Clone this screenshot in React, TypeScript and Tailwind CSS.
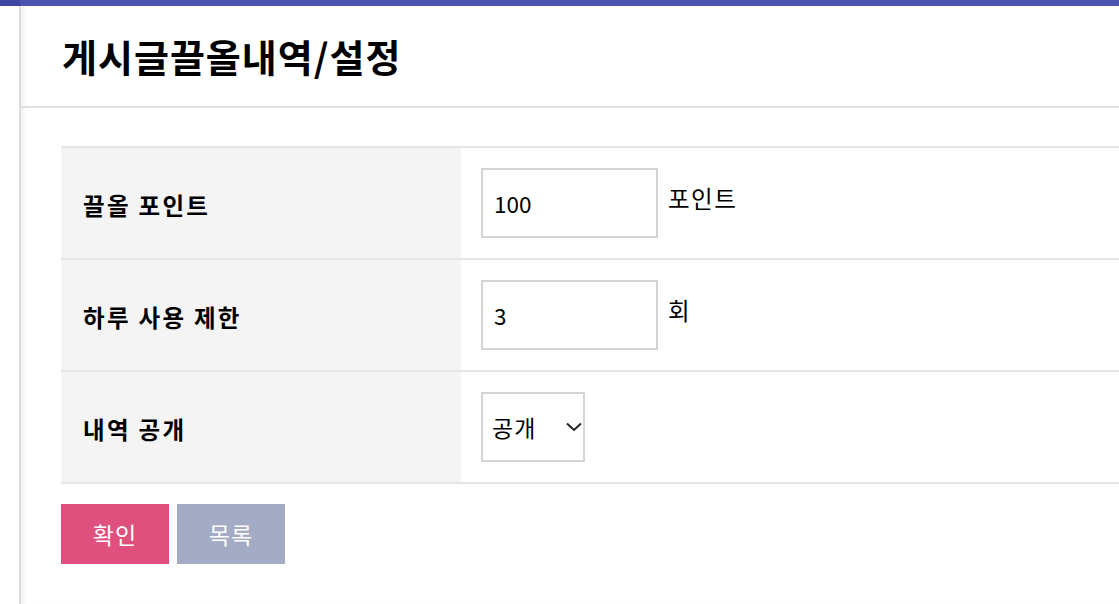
import { type JSX, useState } from 'react'

const font = { fontFamily: '"Malgun Gothic", "Noto Sans CJK KR", "Noto Sans", sans-serif' }

function Row({ label, children }: { label: string; children: React.ReactNode }): JSX.Element {
  return (
    <div className="flex h-[112px] border-b-2 border-[#e6e6e6]">
      <div className="flex w-[400px] items-center bg-[#f4f4f4] pl-[22px] pt-[5px] text-[23.5px] font-bold tracking-[2.3px] text-black">
        {label}
      </div>
      <div className="flex flex-1 items-center pl-[20px]">{children}</div>
    </div>
  )
}

export default function App(): JSX.Element {
  const [point, setPoint] = useState('100')
  const [limit, setLimit] = useState('3')
  const [open, setOpen] = useState('공개')

  return (
    <div className="flex h-screen flex-col overflow-hidden bg-white" style={font}>
      <div className="flex h-[6px] shrink-0">
        <div className="w-[20px] bg-[#3f44a0]" />
        <div className="flex-1 bg-[#4f53b0]" />
      </div>
      <div className="flex flex-1">
        <div className="w-[21px] shrink-0 border-r-2 border-[#dcdcdc] bg-white" />
        <main className="flex-1 shadow-[inset_6px_0_6px_-4px_rgba(0,0,0,0.06)]">
          <header className="flex h-[102px] items-center border-b-2 border-[#e0e0e0] pl-[41px]">
            <h1 className="text-[38px] font-bold leading-none tracking-[1px] text-black">게시글끌올내역/설정</h1>
          </header>

          <section className="pl-[40px] pt-[38px]">
            <div className="border-t-2 border-[#e6e6e6]">
              <Row label="끌올 포인트">
                <input
                  value={point}
                  onChange={(e) => setPoint(e.target.value)}
                  className="h-[70px] w-[177px] border-2 border-[#d4d4d4] px-[11px] text-[22.5px] text-black outline-none"
                  style={font}
                />
                <span className="mb-[8px] ml-[10px] self-center text-[23.5px] tracking-[1.5px] text-black">포인트</span>
              </Row>
              <Row label="하루 사용 제한">
                <input
                  value={limit}
                  onChange={(e) => setLimit(e.target.value)}
                  className="h-[70px] w-[177px] border-2 border-[#d4d4d4] px-[11px] text-[22.5px] text-black outline-none"
                  style={font}
                />
                <span className="mb-[8px] ml-[10px] self-center text-[23.5px] tracking-[1.5px] text-black">회</span>
              </Row>
              <Row label="내역 공개">
                <div className="relative">
                  <select
                    value={open}
                    onChange={(e) => setOpen(e.target.value)}
                    className="h-[70px] w-[104px] appearance-none border-2 border-[#d4d4d4] bg-white pl-[9px] text-[23px] tracking-[1px] text-black outline-none"
                    style={font}
                  >
                    <option>공개</option>
                    <option>비공개</option>
                  </select>
                  <svg
                    className="pointer-events-none absolute right-[3px] top-[30px]"
                    width="16"
                    height="10"
                    viewBox="0 0 16 10"
                    fill="none"
                    stroke="#222"
                    strokeWidth="2"
                  >
                    <path d="M1 1.5l7 6.5 7-6.5" />
                  </svg>
                </div>
              </Row>
            </div>

            <div className="mt-[20px] flex gap-[8px]">
              <button className="h-[60px] w-[108px] bg-[#e0507e] text-[23px] tracking-[1px] text-white" style={font}>
                확인
              </button>
              <button className="h-[60px] w-[108px] bg-[#a3abc5] text-[23px] tracking-[1px] text-white" style={font}>
                목록
              </button>
            </div>
          </section>
        </main>
      </div>
    </div>
  )
}
